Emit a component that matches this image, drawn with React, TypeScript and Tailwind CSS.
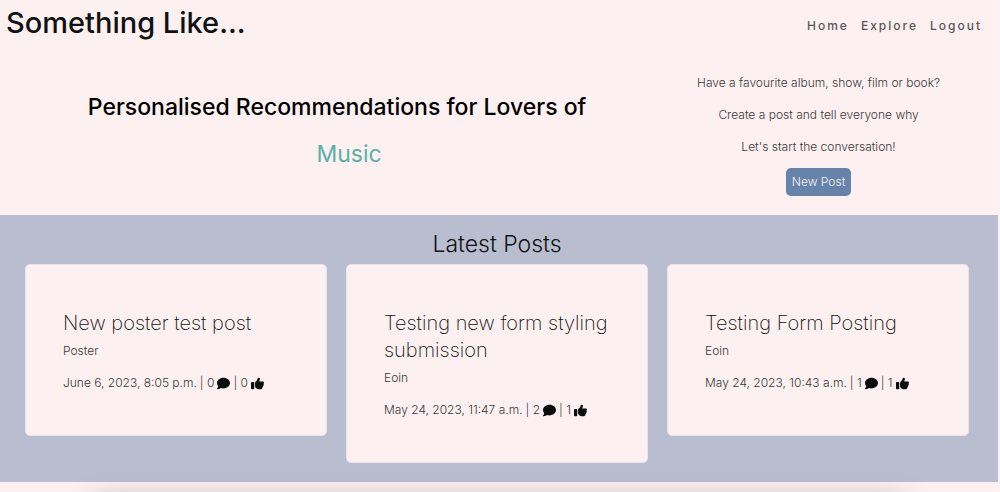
import { FaComment, FaThumbsUp } from "react-icons/fa6";

type Post = {
  title: string;
  author: string;
  date: string;
  comments: number;
  likes: number;
};

const posts: Post[] = [
  { title: "New poster test post", author: "Poster", date: "June 6, 2023, 8:05 p.m.", comments: 0, likes: 0 },
  { title: "Testing new form styling submission", author: "Eoin", date: "May 24, 2023, 11:47 a.m.", comments: 2, likes: 1 },
  { title: "Testing Form Posting", author: "Eoin", date: "May 24, 2023, 10:43 a.m.", comments: 1, likes: 1 },
];

const links = ["Home", "Explore", "Logout"];

function Header() {
  return (
    <header className="flex items-center justify-between pt-1 pr-4 pl-[6px]">
      <a href="#" className="text-[29px] leading-[38px] font-medium text-[#101212]">
        Something Like...
      </a>
      <nav className="flex gap-3 pt-[6px]">
        {links.map((link) => (
          <a key={link} href="#" className="text-[12px] leading-5 font-medium tracking-[2px] text-[#5b5658]">
            {link}
          </a>
        ))}
      </nav>
    </header>
  );
}

function Hero() {
  return (
    <section className="grid grid-cols-[7fr_3fr] pt-[31px] pr-[35px] pb-[19px]">
      <div className="pt-[18px] text-center text-[23px] leading-[32px]">
        <h1 className="font-medium text-black">Personalised Recommendations for Lovers of</h1>
        <p className="mt-[15px] pl-6 text-[#5ab1a7]">Music</p>
      </div>
      <div className="flex flex-col items-center text-center text-[12px] leading-5 font-light text-[#3a3839]">
        <p>Have a favourite album, show, film or book?</p>
        <p className="mt-3">Create a post and tell everyone why</p>
        <p className="mt-3">Let's start the conversation!</p>
        <button type="button" className="mt-[11px] rounded-[5px] bg-[#6683a9] px-[6px] py-1 text-[#fcf1f0]">
          New Post
        </button>
      </div>
    </section>
  );
}

function PostCard({ post }: { post: Post }) {
  return (
    <article className="rounded-[5px] border border-[#ebe3e6] bg-[#fcf1f0] px-[37px] pt-[45px] pb-[42px]">
      <h3 className="text-[20px] leading-[27px] font-extralight text-[#101212]">{post.title}</h3>
      <p className="mt-1 text-[12px] leading-5 font-light text-[#3a3839]">{post.author}</p>
      <p className="mt-3 flex items-center gap-[3px] text-[12px] leading-5 font-light whitespace-nowrap text-[#3a3839]">
        <span>{post.date}</span>
        <span>| {post.comments}</span>
        <FaComment className="size-[13px] text-[#0b0d0d]" aria-label="comments" />
        <span>| {post.likes}</span>
        <FaThumbsUp className="size-[13px] text-[#0b0d0d]" aria-label="likes" />
      </p>
    </article>
  );
}

export default function App() {
  return (
    <div className="h-screen overflow-hidden border-r-2 border-[#f7f3f6] bg-[#fcf1f0] font-['Inter',sans-serif]">
      <Header />
      <Hero />
      <section className="bg-[#b8becf] pt-[13px] pr-[29px] pb-[19px] pl-[25px]">
        <h2 className="text-center text-[23px] leading-[32px] font-light text-[#101212]">Latest Posts</h2>
        <div className="mt-1 grid grid-cols-3 items-start gap-[19px]">
          {posts.map((post) => (
            <PostCard key={post.title} post={post} />
          ))}
        </div>
      </section>
      <section className="px-[92px] pt-[18px]">
        <div className="h-40 rounded-[5px] bg-[#fcf1f0] shadow-[0_0_28px_rgba(0,0,0,0.28)]" />
      </section>
    </div>
  );
}
